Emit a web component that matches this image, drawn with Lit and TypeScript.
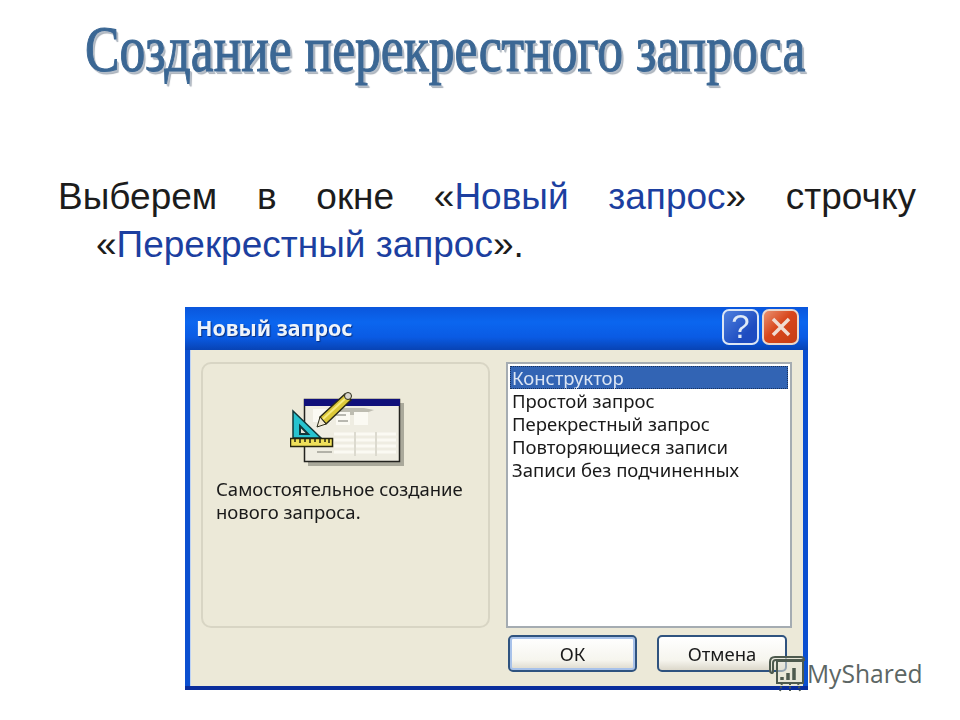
import { LitElement, html, css, svg } from "lit";
import { customElement } from "lit/decorators.js";

const editorIcon = svg`<svg class="editor-icon" width="118" height="84" viewBox="0 0 118 84">
  <rect x="18" y="11" width="96" height="63" fill="#8f8d82" opacity="0.7"/>
  <rect x="14.500" y="7.500" width="95" height="62" fill="#efede2" stroke="#23231f" stroke-width="1.500"/>
  <rect x="14" y="7" width="96" height="7" fill="#10107a"/>
  <path d="M44 16h30l10 2-8 3-6 2H54z" fill="#aaa89c" opacity="0.7"/>
  <rect x="23" y="17" width="18" height="13" fill="#fbfaf3"/>
  <rect x="46" y="20" width="14" height="13" fill="#fbfaf3"/>
  <rect x="64" y="20" width="14" height="13" fill="#fbfaf3"/>
  <path d="M46 23h10M48 29h10" stroke="#77766e"/>
  <path d="M44 42h62M44 48h62M44 54h62M44 60h62" stroke="#fbfaf3" stroke-width="3"/>
  <path d="M65 40v24M86 40v24" stroke="#dcdacf" stroke-width="2"/>
  <path d="M27 54h13M27 60h15" stroke="#77766e"/>
  <path d="M3 46V19l28 27z" fill="#27c3cf" stroke="#12373a" stroke-width="1.500"/>
  <path d="M10 42V34l8 8z" fill="#e8e6da" stroke="#12373a" stroke-width="2"/>
  <path d="M30 25l25-23 6 6-25 24z" fill="#dcc838" stroke="#2a2a18" stroke-width="1.500"/>
  <path d="M33 27l25-23" stroke="#f7eb80" stroke-width="2"/>
  <path d="M27 35l3-10 6 7z" fill="#f3ead4" stroke="#2a2a18"/>
  <circle cx="58" cy="4" r="3.500" fill="#d9d5cc" stroke="#2a2a18"/>
  <rect x="0.500" y="46.500" width="42" height="8" fill="#efe05a" stroke="#24240f" stroke-width="1.500"/>
  <path d="M5 47v3M10 47v4M15 47v3M20 47v4M25 47v3M30 47v4M35 47v3M39 47v4" stroke="#24240f" stroke-width="1.500"/>
</svg>`;

const logo = svg`<svg class="logo" width="38" height="38" viewBox="0 0 38 38" fill="none" stroke="#4e5a4e" stroke-width="2">
  <rect x="9" y="6" width="26" height="22" fill="#e7e5d8" fill-opacity="0.55"/>
  <path d="M2 16V7c0-3 2-5 5-5h26c2 0 3 1 3 3H8c-2 0-3 1-3 3v9c0 2-3 1-3-1z" fill="#e7e5d8" fill-opacity="0.7"/>
  <path d="M14 25v-3M20 25v-7M26 25V13" stroke-width="3.500"/>
  <path d="M14 28l-2 8M22 28v8M30 28l2 8" stroke-dasharray="2 1.500"/>
</svg>`;

@customElement("app-root")
export class AppRoot extends LitElement {
  static styles = css`
    :host {
      display: block;
      position: relative;
      width: 960px;
      height: 720px;
      overflow: hidden;
      background: #fff;
      box-sizing: border-box;
      padding-top: 18px;
      font-family: "Liberation Sans", sans-serif;
    }
    .title {
      margin: 0 0 0 85px;
      height: 68px;
      font-family: "Liberation Serif", serif;
      font-size: 66px;
      line-height: 62px;
      font-weight: 400;
      color: #3b6794;
      white-space: nowrap;
      transform-origin: left top;
      transform: scaleX(0.781);
      -webkit-text-stroke: 1.1px #3b6794;
      text-shadow: 2px 2px 0 #b5bec9, 3px 3px 1px #a9b0b9;
    }
    .lead {
      margin: 87px 44px 0 58px;
      font-size: 37px;
      line-height: 48px;
      color: #1c1c1c;
    }
    .lead-first {
      text-align: justify;
      text-align-last: justify;
    }
    .lead-second {
      padding-left: 38px;
    }
    .term {
      color: #1c3fa0;
    }
    .dialog {
      box-sizing: border-box;
      width: 623px;
      height: 383px;
      margin: 38px 0 0 185px;
      display: flex;
      flex-direction: column;
      background: #0b4fd0;
      border-bottom: 4px solid #0a2d9c;
      filter: blur(0.35px);
    }
    .titlebar {
      flex: none;
      height: 43px;
      box-sizing: border-box;
      padding: 0 9px 3px 11px;
      display: flex;
      align-items: center;
      justify-content: space-between;
      background: linear-gradient(#0a56dc, #0b66ef 35%, #0a5be4 70%, #0843b4);
    }
    .caption {
      font-family: "Noto Sans", sans-serif;
      font-weight: 700;
      font-size: 21.4px;
      color: #eef4fa;
      text-shadow: 1px 1px 1px #0a2f7c;
    }
    .controls {
      display: flex;
      gap: 3px;
    }
    .control {
      box-sizing: border-box;
      width: 37px;
      height: 36px;
      border: 2px solid #dbe6f4;
      border-radius: 7px;
      display: flex;
      align-items: center;
      justify-content: center;
      color: #dfeaf7;
      font-family: "Liberation Sans", sans-serif;
      font-size: 33px;
      font-weight: 400;
      background: linear-gradient(135deg, #4d7fde, #1d4cc0 70%);
    }
    .control-close {
      background: linear-gradient(135deg, #e99272, #d8471c 45%, #c63d14);
      border-color: #ead8cc;
    }
    .body {
      flex: 1;
      min-height: 0;
      margin: 0 5px 0 5px;
      border-left: 1px solid #bcd2f5;
      box-sizing: border-box;
      background: #ece9d8;
      padding: 12px 15px 0 10px;
      display: grid;
      grid-template-columns: 289px 286px;
      grid-template-rows: 266px 37px;
      column-gap: 16px;
      row-gap: 7px;
      font-family: "Noto Sans", sans-serif;
      color: #1a1a1a;
      font-size: 18.5px;
    }
    .panel {
      box-sizing: border-box;
      border: 2px solid #d8d5c4;
      border-radius: 10px;
      padding: 28px 12px 0 13px;
      display: flex;
      flex-direction: column;
    }
    .editor-icon {
      display: block;
      margin: 0 0 0 74px;
      flex: none;
    }
    .desc {
      margin: 1px 0 0 0;
      line-height: 23px;
    }
    .list {
      box-sizing: border-box;
      border: 2px solid #a5acb2;
      background: #fff;
      padding: 2px;
      line-height: 23px;
    }
    .item {
      padding-left: 2px;
      height: 23px;
      white-space: nowrap;
    }
    .item-selected {
      background: #3264b4;
      color: #dbe5f4;
      outline: 1px dotted #17305c;
      outline-offset: -1px;
    }
    .buttons {
      grid-column: 2;
      display: flex;
      gap: 20px;
      margin-left: 2px;
    }
    .button {
      box-sizing: border-box;
      width: 130px;
      height: 37px;
      border: 2px solid #2f537f;
      border-radius: 5px;
      display: flex;
      align-items: center;
      justify-content: center;
      background: linear-gradient(#ffffff, #f6f5ee 70%, #dcd8cb);
    }
    .button-default {
      width: 129px;
      box-shadow: inset 0 0 0 2px #a8c2ea;
    }
    .watermark {
      position: absolute;
      left: 768px;
      top: 655px;
      display: flex;
      align-items: center;
      gap: 1px;
      font-family: "Open Sans", sans-serif;
      font-size: 24.6px;
      line-height: 38px;
      color: #5c6664;
    }
  `;

  render() {
    return html`
      <h1 class="title">Создание перекрестного запроса</h1>
      <div class="lead">
        <div class="lead-first">Выберем в окне «<span class="term">Новый запрос</span>» строчку</div>
        <div class="lead-second">«<span class="term">Перекрестный запрос</span>».</div>
      </div>
      <div class="dialog">
        <div class="titlebar">
          <span class="caption">Новый запрос</span>
          <div class="controls">
            <div class="control">?</div>
            <div class="control control-close">
              <svg width="22" height="22" viewBox="0 0 22 22"><path d="M3 3l16 16M19 3L3 19" stroke="#f0dcd2" stroke-width="3.500"/></svg>
            </div>
          </div>
        </div>
        <div class="body">
          <div class="panel">
            ${editorIcon}
            <p class="desc">Самостоятельное создание<br />нового запроса.</p>
          </div>
          <div class="list">
            <div class="item item-selected">Конструктор</div>
            <div class="item">Простой запрос</div>
            <div class="item">Перекрестный запрос</div>
            <div class="item">Повторяющиеся записи</div>
            <div class="item">Записи без подчиненных</div>
          </div>
          <div class="buttons">
            <div class="button button-default">ОК</div>
            <div class="button">Отмена</div>
          </div>
        </div>
      </div>
      <div class="watermark">${logo}<span>MyShared</span></div>
    `;
  }
}
